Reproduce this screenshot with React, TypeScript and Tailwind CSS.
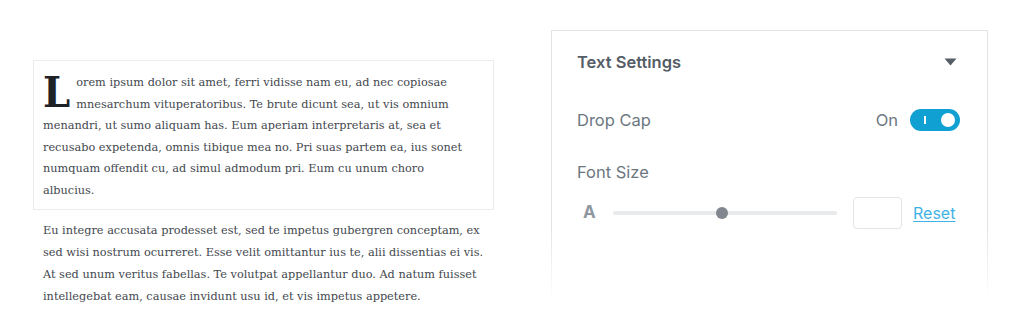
import React from 'react';

const serif = { fontFamily: '"DejaVu Serif", "Liberation Serif", serif' };

function Toggle() {
  return (
    <div className="relative flex h-[22px] w-[50px] items-center rounded-full bg-[#11a0d2] px-[5px]">
      <span className="ml-[9px] h-[8px] w-[2px] bg-white" />
      <span className="ml-auto h-[14px] w-[14px] rounded-full bg-white" />
    </div>
  );
}

export default function App() {
  return (
    <div className="relative flex h-[332px] w-[1024px] overflow-hidden bg-white" style={{ fontFamily: 'Inter, "Liberation Sans", sans-serif' }}>
      {/* editor content */}
      <div className="ml-[33px] mt-[60px] w-[461px] text-[11.3px] leading-[21.5px] text-[#43484e]" style={serif}>
        <div className="border border-[#ececec] px-[9px] pt-[11px] pb-[8px]">
          {/* drop cap via ::first-letter */}
          <p className="first-letter:float-left first-letter:mr-[6px] first-letter:text-[43px] first-letter:font-bold first-letter:leading-[40px] first-letter:text-[#1e2226] first-letter:font-stretch-condensed">
            Lorem ipsum dolor sit amet, ferri vidisse nam eu, ad nec copiosae mnesarchum vituperatoribus. Te brute dicunt sea, ut vis omnium menandri, ut sumo aliquam has. Eum aperiam interpretaris at, sea et recusabo expetenda, omnis tibique mea no. Pri suas partem ea, ius sonet numquam offendit cu, ad simul admodum pri. Eum cu unum choro
            <br />
            albucius.
          </p>
        </div>
        <p className="mt-[10px] px-[10px] leading-[22px]">
          Eu integre accusata prodesset est, sed te impetus gubergren conceptam, ex sed wisi nostrum ocurreret. Esse velit omittantur ius te, alii dissentias ei vis. At sed unum veritus fabellas. Te volutpat appellantur duo. Ad natum fuisset intellegebat eam, causae invidunt usu id, et vis impetus appetere.
        </p>
      </div>

      {/* settings panel */}
      <div className="relative ml-[57px] mt-[30px] h-[270px] w-[437px] border border-[#e2e4e7] pl-[25px] pr-[27px]">
        <div className="flex h-[62px] items-center justify-between">
          <span className="text-[16.5px] font-semibold text-[#555d66]">Text Settings</span>
          <svg width="13" height="8" viewBox="0 0 13 8" className="mr-[3px]">
            <path d="M0.5 0.5 L12.5 0.5 L6.5 7.5 Z" fill="#555d66" />
          </svg>
        </div>
        <div className="mt-[15px] flex h-[24px] items-center justify-between">
          <span className="text-[16.5px] text-[#6c7781]">Drop Cap</span>
          <div className="flex items-center gap-[12px]">
            <span className="text-[16.5px] text-[#6c7781]">On</span>
            <Toggle />
          </div>
        </div>
        <div className="mt-[28px] text-[16.5px] text-[#6c7781]">Font Size</div>
        <div className="mt-[12px] flex h-[32px] items-center">
          <span className="w-[30px] pl-[6px] text-[17px] font-bold text-[#8f98a1]">A</span>
          <div className="relative ml-[6px] flex h-[4px] w-[224px] items-center rounded-full bg-[#e8eaeb]">
            <span className="absolute left-[103px] h-[12px] w-[12px] rounded-full bg-[#80878e]" />
          </div>
          <div className="ml-[16px] h-[32px] w-[49px] rounded-[4px] border border-[#e2e4e7]" />
          <span className="ml-[11px] text-[16px] text-[#3fb3e5] underline underline-offset-2">Reset</span>
        </div>
        <div className="absolute bottom-[-1px] left-[-1px] right-[-1px] h-[70px] bg-gradient-to-b from-white/0 to-white" />
      </div>
    </div>
  );
}
